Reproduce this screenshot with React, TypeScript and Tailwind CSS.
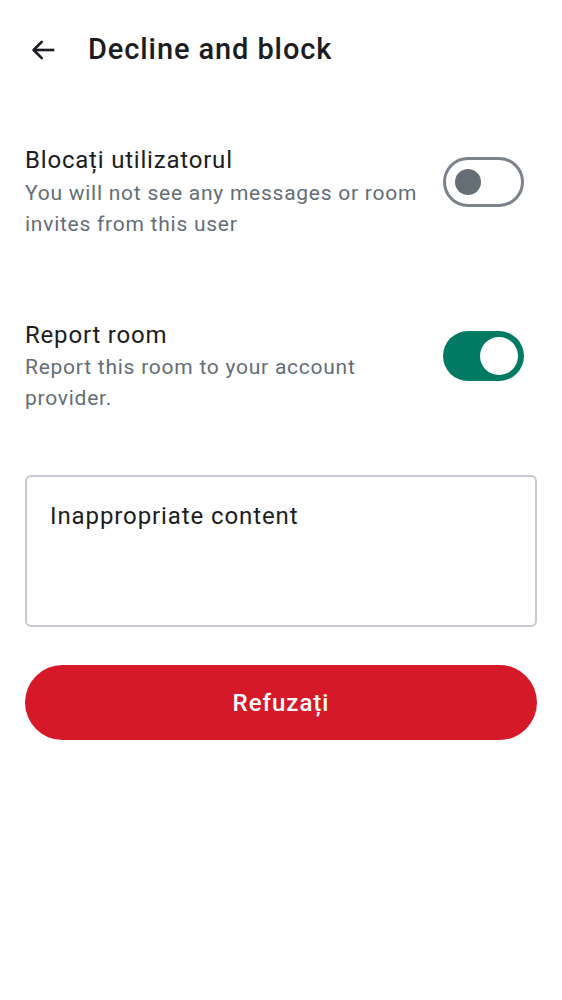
import { useState } from 'react';

const Toggle = ({ on, onClick }: { on: boolean; onClick: () => void }) => {
  return (
    <button
      onClick={onClick}
      className={
        on
          ? 'mt-[11px] w-[81px] h-[50px] rounded-full bg-[#007a62] shrink-0 flex items-center justify-end pr-[6px]'
          : 'mt-[12px] w-[81px] h-[50px] rounded-full border-[3px] border-[#7c838d] bg-white shrink-0 flex items-center pl-[9px]'
      }
    >
      {on ? (
        <span className="block w-[38px] h-[38px] rounded-full bg-white" />
      ) : (
        <span className="block w-[26px] h-[26px] rounded-full bg-[#656d77]" />
      )}
    </button>
  );
};

const Row = ({
  title,
  desc,
  on,
  onClick,
}: {
  title: string;
  desc: string;
  on: boolean;
  onClick: () => void;
}) => (
  <div className="flex items-start gap-6">
    <div className="flex-1">
      <div className="text-[24px] leading-[30px] tracking-[0.8px] text-[#1b1d22]">{title}</div>
      <div className="text-[21px] leading-[31px] tracking-[0.75px] text-[#656d77] mt-[2.5px]">{desc}</div>
    </div>
    <Toggle on={on} onClick={onClick} />
  </div>
);

export default function App() {
  const [block, setBlock] = useState(false);
  const [report, setReport] = useState(true);

  return (
    <div className="w-[562px] h-[1000px] bg-white font-['Roboto',sans-serif]">
      <div className="flex items-center h-[100px] pl-[28px]">
        <svg width="30" height="30" viewBox="0 0 24 24" fill="none" stroke="#1b1d22" strokeWidth="2.1" strokeLinecap="square">
          <path d="M20 12H5" />
          <path d="M11 5.5 4.5 12l6.5 6.5" strokeLinecap="round" strokeLinejoin="round" />
        </svg>
        <h1 className="ml-[30px] text-[29px] tracking-[0.9px] text-[#1b1d22] font-medium">Decline and block</h1>
      </div>

      <div className="pl-[25px] pt-[45px] pr-[38px]">
        <Row
          title="Blocați utilizatorul"
          desc="You will not see any messages or room invites from this user"
          on={block}
          onClick={() => setBlock(!block)}
        />
        <div className="h-[80px]" />
        <Row
          title="Report room"
          desc="Report this room to your account provider."
          on={report}
          onClick={() => setReport(!report)}
        />
      </div>

      <div className="px-[25px] pt-[61px]">
        <div className="h-[152px] rounded-[6px] border-2 border-[#c5cad2] px-[23px] pt-[24px] text-[24px] leading-[30px] tracking-[0.9px] text-[#1b1d22]">
          Inappropriate content
        </div>
        <button className="mt-[38px] w-full h-[75px] rounded-full bg-[#d51928] text-white text-[24px] tracking-[1px] font-medium">
          Refuzați
        </button>
      </div>
    </div>
  );
}
